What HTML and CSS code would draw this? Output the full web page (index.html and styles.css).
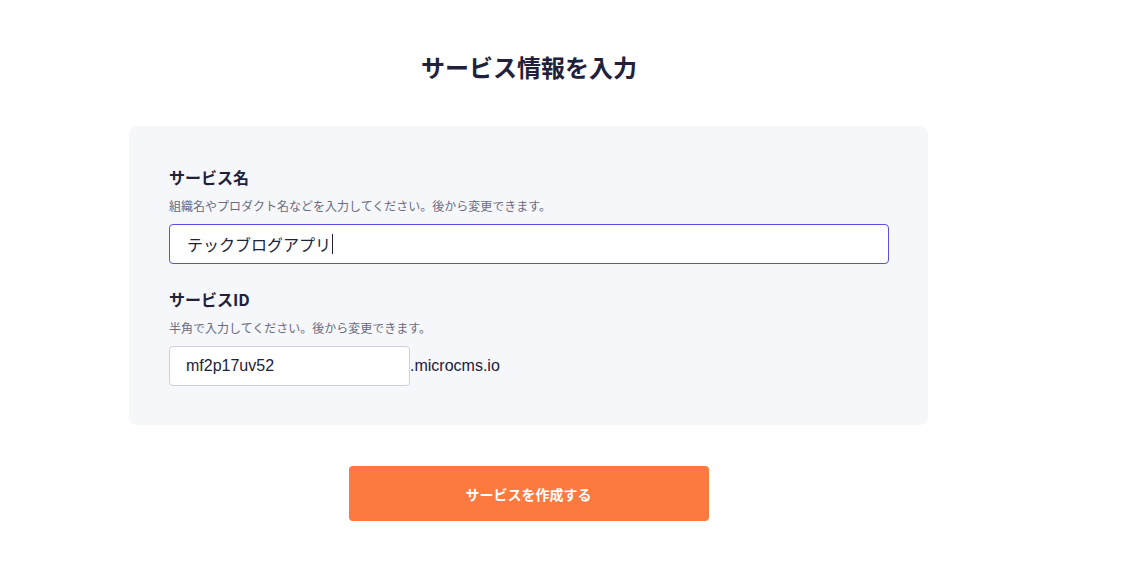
FILE: index.html
```html
<!DOCTYPE html>
<html lang="ja">
<head>
<meta charset="utf-8">
<link rel="stylesheet" href="styles.css">
</head>
<body>
<main class="page">
  <h1 class="title">サービス情報を入力</h1>
  <section class="card">
    <div class="field">
      <label class="label">サービス名</label>
      <p class="help">組織名やプロダクト名などを入力してください。後から変更できます。</p>
      <div class="input input-focus"><span>テックブログアプリ</span><span class="caret"></span></div>
    </div>
    <div class="field">
      <label class="label">サービスID</label>
      <p class="help">半角で入力してください。後から変更できます。</p>
      <div class="id-row">
        <div class="input input-id"><span class="latin">mf2p17uv52</span></div>
        <span class="suffix">.microcms.io</span>
      </div>
    </div>
  </section>
  <button class="submit">サービスを作成する</button>
</main>
</body>
</html>
```
FILE: styles.css
```css
* { box-sizing: border-box; }
html, body { margin: 0; padding: 0; background: #fff; }
body {
  font-family: "Noto Sans CJK JP", "Noto Sans", sans-serif;
  color: #21213b;
}
.page {
  width: 800px;
  margin-left: 129px;
  display: flex;
  flex-direction: column;
  align-items: center;
  padding-top: 47px;
}
.title {
  margin: 0;
  font-size: 24px;
  line-height: 40px;
  font-weight: 700;
  color: #21213b;
}
.card {
  margin-top: 39px;
  width: 799px;
  background: #f6f7fb;
  border-radius: 8px;
  padding: 39px 40px 39px;
  align-self: flex-start;
}
.field + .field { margin-top: 23px; }
.label {
  display: block;
  font-size: 16px;
  font-weight: 700;
  line-height: 24px;
  color: #21213b;
}
.help {
  margin: 8px 0 9px;
  font-size: 12px;
  line-height: 18px;
  color: #6a6a80;
}
.input {
  height: 40px;
  background: #fff;
  border: 1px solid #cfd0dc;
  border-radius: 4px;
  display: flex;
  align-items: center;
  padding-left: 17px;
  font-size: 16px;
  color: #21213b;
}
.input-focus {
  width: 720px;
  border-color: #5b4ee0;
}
.caret {
  display: inline-block;
  width: 1px;
  height: 20px;
  background: #21213b;
  margin-left: 1px;
}
.id-row {
  display: flex;
  align-items: center;
}
.input-id { width: 241px; padding-left: 16px; }
.latin, .suffix { font-family: "Liberation Sans", Arial, sans-serif; }
.suffix { font-size: 16px; color: #21213b; }
.submit {
  margin-top: 41px;
  width: 360px;
  height: 55px;
  border: none;
  border-radius: 4px;
  background: #fc7940;
  color: #fff;
  font-family: "Noto Sans CJK JP", sans-serif;
  font-size: 14px;
  font-weight: 700;
  margin-right: 1px;
}
```
